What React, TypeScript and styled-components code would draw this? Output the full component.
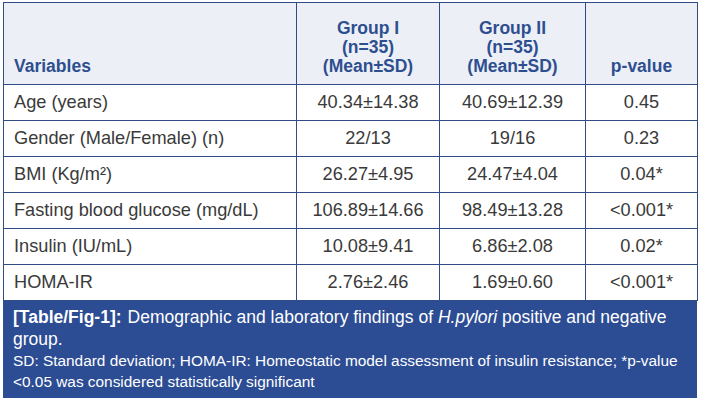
import React from "react";
import styled, { createGlobalStyle } from "styled-components";

const GlobalStyle = createGlobalStyle`
    body {
        margin: 0;
        background: #ffffff;
        font-family: "Liberation Sans", Arial, sans-serif;
    }
`;

const Figure = styled.div`
    width: 694px;
    margin: 2px 0 0 3px;
`;

const Table = styled.table`
    width: 100%;
    table-layout: fixed;
    border-collapse: collapse;
    font-size: 18.2px;
    color: #3a3a3a;
`;

const HeadRow = styled.tr`
    height: 82px;
    background: #edeff7;
`;

const HeadCell = styled.th<{ $left?: boolean }>`
    border: 1px solid #2f4c85;
    padding: 0 8px 8px ${(p) => (p.$left ? "10px" : "8px")};
    vertical-align: bottom;
    text-align: ${(p) => (p.$left ? "left" : "center")};
    color: #2e4f8f;
    font-size: 17.5px;
    font-weight: bold;
    line-height: 19px;
`;

const Row = styled.tr`
    height: 36px;
`;

const Cell = styled.td<{ $left?: boolean }>`
    border: 1px solid #2f4c85;
    padding: 0 8px 0 ${(p) => (p.$left ? "10px" : "8px")};
    text-align: ${(p) => (p.$left ? "left" : "center")};
    vertical-align: middle;
    white-space: nowrap;
`;

const Caption = styled.div`
    background: #2c4c94;
    color: #ffffff;
    padding: 5px 6px 6px 10px;
`;

const Title = styled.p`
    margin: 0;
    font-size: 17.5px;
    line-height: 22px;
`;

const Label = styled.b`
    font-weight: bold;
    margin-right: 6px;
`;

const Note = styled.p`
    margin: 0;
    font-size: 15.4px;
    line-height: 21px;
`;

const rows = [
    ["Age (years)", "40.34±14.38", "40.69±12.39", "0.45"],
    ["Gender (Male/Female) (n)", "22/13", "19/16", "0.23"],
    ["BMI (Kg/m²)", "26.27±4.95", "24.47±4.04", "0.04*"],
    ["Fasting blood glucose (mg/dL)", "106.89±14.66", "98.49±13.28", "<0.001*"],
    ["Insulin (IU/mL)", "10.08±9.41", "6.86±2.08", "0.02*"],
    ["HOMA-IR", "2.76±2.46", "1.69±0.60", "<0.001*"],
];

const App: React.FC = () => (
    <>
        <GlobalStyle />
        <Figure>
            <Table>
                <colgroup>
                    <col style={{ width: 293 }} />
                    <col style={{ width: 143 }} />
                    <col style={{ width: 146 }} />
                    <col style={{ width: 112 }} />
                </colgroup>
                <thead>
                    <HeadRow>
                        <HeadCell $left>Variables</HeadCell>
                        <HeadCell>
                            Group I<br />
                            (n=35)
                            <br />
                            (Mean±SD)
                        </HeadCell>
                        <HeadCell>
                            Group II<br />
                            (n=35)
                            <br />
                            (Mean±SD)
                        </HeadCell>
                        <HeadCell>p-value</HeadCell>
                    </HeadRow>
                </thead>
                <tbody>
                    {rows.map((r) => (
                        <Row key={r[0]}>
                            <Cell $left>{r[0]}</Cell>
                            <Cell>{r[1]}</Cell>
                            <Cell>{r[2]}</Cell>
                            <Cell>{r[3]}</Cell>
                        </Row>
                    ))}
                </tbody>
            </Table>
            <Caption>
                <Title>
                    <Label>[Table/Fig-1]:</Label>Demographic and laboratory findings of{" "}
                    <i>H.pylori</i> positive and negative group.
                </Title>
                <Note>
                    SD: Standard deviation; HOMA-IR: Homeostatic model assessment of
                    insulin resistance; *p-value &lt;0.05 was considered statistically
                    significant
                </Note>
            </Caption>
        </Figure>
    </>
);

export default App;
